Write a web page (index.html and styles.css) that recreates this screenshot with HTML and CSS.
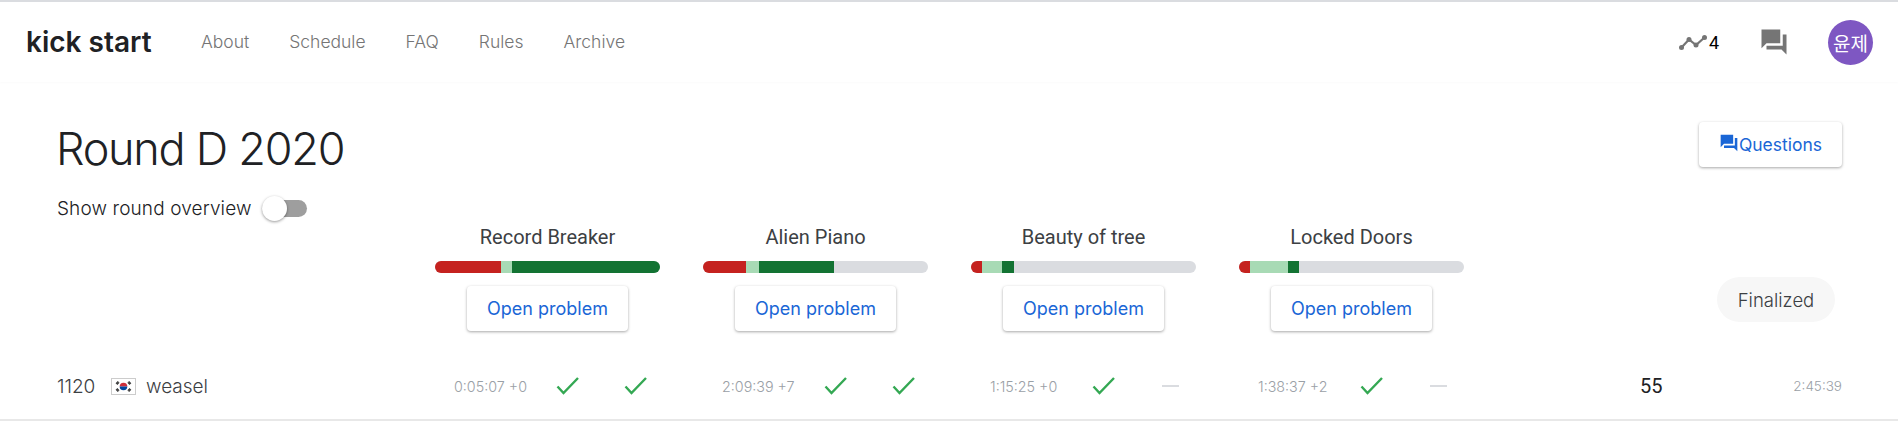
FILE: index.html
```html
<!DOCTYPE html>
<html lang="en">
<head>
    <meta charset="UTF-8">
    <meta name="viewport" content="width=device-width, initial-scale=1.0">
    <title>Kick Start - Round D 2020</title>
    <link rel="stylesheet" href="styles.css">
</head>
<body>

    <header class="topbar">
        <div class="logo">kick start</div>
        <nav class="nav">
            <a href="#">About</a>
            <a href="#">Schedule</a>
            <a href="#">FAQ</a>
            <a href="#">Rules</a>
            <a href="#">Archive</a>
        </nav>
        <div class="topbar-right">
            <div class="streak">
                <svg class="streak-icon" viewBox="0 0 28 15">
                    <polyline points="2.5,12.5 10,4.5 17,10 25.5,2.5" fill="none" stroke="#757575" stroke-width="2.2"/>
                    <circle cx="2.5" cy="12.5" r="2.5" fill="#757575"/>
                    <circle cx="10" cy="4.5" r="2.5" fill="#757575"/>
                    <circle cx="17" cy="10" r="2.5" fill="#757575"/>
                    <circle cx="25.5" cy="2.5" r="2.5" fill="#757575"/>
                </svg>
                <span>4</span>
            </div>
            <svg class="chat-icon" viewBox="0 0 24 24">
                <path d="M22 6h-3v9H6v3h12l4 4V6zm-5 7V2H2v15l4-4h11z" fill="#757575"/>
            </svg>
            <div class="avatar">윤제</div>
        </div>
    </header>

    <main class="page">
        <div class="title-row">
            <h1>Round D 2020</h1>
            <button class="btn btn-questions">
                <svg class="btn-icon" viewBox="0 0 24 24">
                    <path d="M22 6h-3v9H6v3h12l4 4V6zm-5 7V2H2v15l4-4h11z" fill="#1a66d6"/>
                </svg>Questions
            </button>
        </div>

        <div class="overview">
            <span>Show round overview</span>
            <div class="switch"><div class="switch-thumb"></div></div>
        </div>

        <div class="board">
            <div class="corner"></div>

            <div class="problem">
                <div class="problem-name">Record Breaker</div>
                <div class="bar">
                    <div class="seg-red" style="width:66px"></div>
                    <div class="seg-light" style="width:11px"></div>
                    <div class="seg-dark" style="width:148px"></div>
                </div>
                <button class="btn">Open problem</button>
            </div>

            <div class="problem">
                <div class="problem-name">Alien Piano</div>
                <div class="bar">
                    <div class="seg-red" style="width:43px"></div>
                    <div class="seg-light" style="width:13px"></div>
                    <div class="seg-dark" style="width:75px"></div>
                </div>
                <button class="btn">Open problem</button>
            </div>

            <div class="problem">
                <div class="problem-name">Beauty of tree</div>
                <div class="bar">
                    <div class="seg-red" style="width:11px"></div>
                    <div class="seg-light" style="width:20px"></div>
                    <div class="seg-dark" style="width:12px"></div>
                </div>
                <button class="btn">Open problem</button>
            </div>

            <div class="problem">
                <div class="problem-name">Locked Doors</div>
                <div class="bar">
                    <div class="seg-red" style="width:11px"></div>
                    <div class="seg-light" style="width:38px"></div>
                    <div class="seg-dark" style="width:11px"></div>
                </div>
                <button class="btn">Open problem</button>
            </div>

            <div class="spacer"></div>
            <div class="status-cell"><div class="pill">Finalized</div></div>

            <div class="rank-cell">
                <span class="rank">1120</span>
                <svg class="flag" viewBox="0 0 25 17">
                    <rect x="0.5" y="0.5" width="24" height="16" fill="#fff" stroke="#ccc"/>
                    <path d="M8.7 8.5a3.8 3.8 0 0 1 7.6 0z" fill="#cd2e3a"/>
                    <path d="M8.7 8.5a3.8 3.8 0 0 0 7.6 0z" fill="#0047a0"/>
                    <path d="M5 5.6l2.2-2.2M5.9 6.5l2.2-2.2M19.9 5.6l-2.2-2.2M19 6.5l-2.2-2.2M5 11.4l2.2 2.2M5.9 10.5l2.2 2.2M19.9 11.4l-2.2 2.2M19 10.5l-2.2 2.2" stroke="#333" stroke-width="1.2"/>
                </svg>
                <span>weasel</span>
            </div>

            <div class="attempt">
                <span class="time">0:05:07 +0</span>
                <span class="mark"><svg class="check" viewBox="0 0 24 18"><path d="M1.5 9.5l6 6.5L22 1" fill="none" stroke="#34a853" stroke-width="2.4"/></svg></span>
                <span class="mark"><svg class="check" viewBox="0 0 24 18"><path d="M1.5 9.5l6 6.5L22 1" fill="none" stroke="#34a853" stroke-width="2.4"/></svg></span>
            </div>
            <div class="attempt">
                <span class="time">2:09:39 +7</span>
                <span class="mark"><svg class="check" viewBox="0 0 24 18"><path d="M1.5 9.5l6 6.5L22 1" fill="none" stroke="#34a853" stroke-width="2.4"/></svg></span>
                <span class="mark"><svg class="check" viewBox="0 0 24 18"><path d="M1.5 9.5l6 6.5L22 1" fill="none" stroke="#34a853" stroke-width="2.4"/></svg></span>
            </div>
            <div class="attempt">
                <span class="time">1:15:25 +0</span>
                <span class="mark"><svg class="check" viewBox="0 0 24 18"><path d="M1.5 9.5l6 6.5L22 1" fill="none" stroke="#34a853" stroke-width="2.4"/></svg></span>
                <span class="mark"><span class="dash"></span></span>
            </div>
            <div class="attempt">
                <span class="time">1:38:37 +2</span>
                <span class="mark"><svg class="check" viewBox="0 0 24 18"><path d="M1.5 9.5l6 6.5L22 1" fill="none" stroke="#34a853" stroke-width="2.4"/></svg></span>
                <span class="mark"><span class="dash"></span></span>
            </div>

            <div class="score">55</div>
            <div class="total-time">2:45:39</div>
        </div>
    </main>

</body>
</html>
```

FILE: styles.css
```css
* {
    box-sizing: border-box;
}
html, body {
    height: 421px;
    overflow: hidden;
}
body {
    margin: 0;
    font-family: Inter, "Noto Sans", sans-serif;
    font-weight: 300;
    color: #202124;
    background-color: #fff;
    border-bottom: 2px solid #e8e8e8;
}
.topbar {
    height: 82px;
    display: flex;
    align-items: center;
    padding-left: 26px;
    border-top: 2px solid #dadce0;
    box-shadow: 0 1px 2px rgba(0, 0, 0, 0.02);
}
.logo {
    width: 175px;
    font-size: 28px;
    font-weight: 600;
}
.nav {
    display: flex;
    gap: 40px;
    margin-top: -1px;
    font-size: 17.5px;
}
.nav a {
    color: #757575;
    text-decoration: none;
}
.topbar-right {
    margin-left: auto;
    display: flex;
    align-items: center;
    padding-right: 25px;
}
.streak {
    display: flex;
    align-items: center;
    gap: 2px;
    font-family: Roboto, sans-serif;
    font-size: 18px;
    font-weight: 400;
    color: #000;
}
.streak-icon {
    width: 28px;
    height: 15px;
}
.chat-icon {
    width: 30px;
    height: 30px;
    margin-left: 40px;
}
.avatar {
    width: 45px;
    height: 45px;
    margin-left: 39px;
    border-radius: 50%;
    background: #7e57c2;
    color: #fff;
    display: flex;
    align-items: center;
    justify-content: center;
    font-family: "Noto Sans CJK KR", sans-serif;
    font-size: 19px;
    font-weight: 400;
}
.page {
    padding: 40px 56px 0 57px;
}
.title-row {
    display: flex;
    justify-content: space-between;
    align-items: flex-start;
}
h1 {
    margin: 0 0 0 -1px;
    font-size: 45px;
    font-weight: 300;
    line-height: 53px;
    letter-spacing: -1.25px;
}
.btn {
    height: 45px;
    width: 161px;
    border: none;
    border-radius: 4px;
    background: #fff;
    color: #1a66d6;
    font-family: inherit;
    font-size: 18px;
    font-weight: 400;
    box-shadow: 0 1px 3px rgba(0, 0, 0, 0.35);
}
.btn-questions {
    width: 143px;
    display: flex;
    align-items: center;
    justify-content: center;
    font-size: 17.5px;
}
.btn-icon {
    width: 20px;
    height: 20px;
    margin-top: -4px;
}
.overview {
    display: flex;
    align-items: center;
    gap: 10px;
    height: 26px;
    margin-top: 20px;
    font-size: 19px;
    letter-spacing: 0.12px;
}
.switch {
    width: 45px;
    height: 17px;
    border-radius: 9px;
    background: #9e9e9e;
    position: relative;
}
.switch-thumb {
    position: absolute;
    left: 0;
    top: -4px;
    width: 25px;
    height: 25px;
    border-radius: 50%;
    background: #fff;
    box-shadow: 0 1px 3px rgba(0, 0, 0, 0.4);
}
.board {
    display: grid;
    grid-template-columns: 378px repeat(4, 268px) 210px 125px;
    margin-top: 5px;
}
.problem {
    width: 225px;
    display: flex;
    flex-direction: column;
    align-items: center;
}
.problem-name {
    height: 35px;
    line-height: 22px;
    white-space: nowrap;
    font-family: Roboto, sans-serif;
    font-size: 20px;
    font-weight: 400;
    color: #3c4043;
}
.bar {
    width: 100%;
    height: 12px;
    display: flex;
    border-radius: 6px;
    overflow: hidden;
    background: #dadce0;
    margin-bottom: 13px;
}
.seg-red {
    background: #c5221f;
}
.seg-light {
    background: #a8dab5;
}
.seg-dark {
    background: #137333;
}
.status-cell {
    padding-top: 51px;
}
.pill {
    width: 118px;
    height: 45px;
    border-radius: 23px;
    background: #f7f7f7;
    display: flex;
    align-items: center;
    justify-content: center;
    font-size: 18.5px;
    color: #3c4043;
}
.rank-cell, .attempt, .score, .total-time {
    height: 88px;
    display: flex;
    align-items: center;
    padding-top: 22px;
}
.rank-cell {
    font-size: 19px;
    color: #3c4043;
}
.rank {
    width: 54px;
}
.flag {
    width: 25px;
    height: 17px;
    margin-right: 10px;
}
.attempt {
    padding-left: 19px;
}
.time {
    width: 102px;
    font-size: 14.3px;
    color: #9aa0a6;
}
.mark {
    width: 68px;
    display: flex;
    align-items: center;
}
.check {
    width: 24px;
    height: 18px;
}
.dash {
    width: 17px;
    height: 2px;
    margin-left: 2px;
    background: #dadce0;
}
.score {
    padding-left: 133px;
    font-family: Roboto, sans-serif;
    font-size: 20px;
    font-weight: 400;
    color: #202124;
}
.total-time {
    justify-content: flex-end;
    font-size: 13.5px;
    color: #9aa0a6;
}
```
